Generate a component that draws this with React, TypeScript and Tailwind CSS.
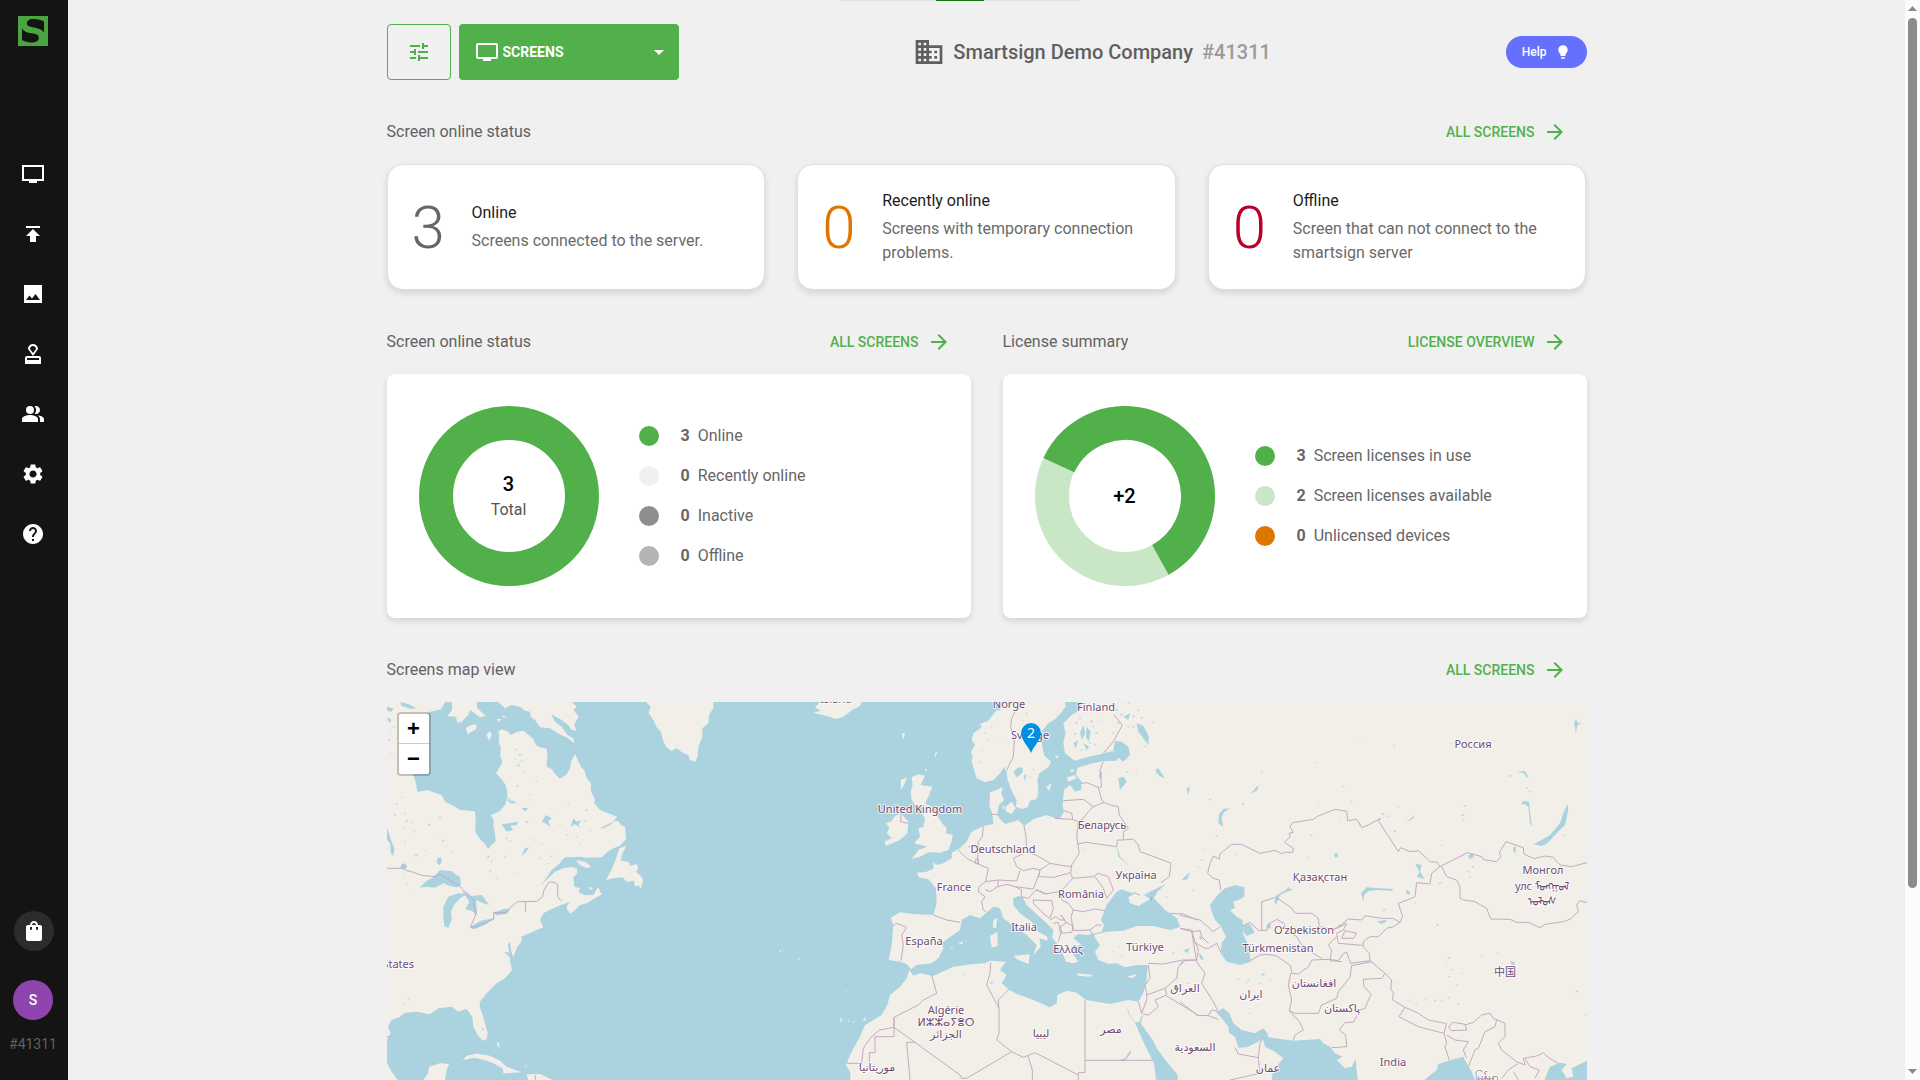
import React from "react";
import {
  MdPublish,
  MdOutlineApproval,
  MdPeopleAlt,
  MdSettings,
  MdHelp,
  MdShoppingBag,
  MdTune,
  MdTv,
  MdArrowDropDown,
  MdDomain,
  MdLightbulb,
  MdArrowForward,
} from "react-icons/md";

function TvSharp() {
  return (
    <svg viewBox="0 0 24 24" className="size-6" fill="currentColor" aria-hidden="true">
      <path d="M23 3H1v16h7v2h8v-2h7V3zm-2 14H3V5h18v12z" />
    </svg>
  );
}

function ImageSharp() {
  return (
    <svg viewBox="0 0 24 24" className="size-6" fill="currentColor" aria-hidden="true">
      <path d="M21 3H3v18h18V3zM8.5 13.5l2.5 3.01L14.5 12l4.5 6H5l3.5-4.5z" />
    </svg>
  );
}

function Logo() {
  return (
    <svg viewBox="0 0 30 28" preserveAspectRatio="none" className="size-[30px]" aria-hidden="true">
      <rect width="30" height="28" fill="#4aa540" />
      <path
        d="M26 15.5V5.2C23.5 3.6 19.5 2.8 15.5 2.9C11 3 8.700 4.600 8.900 7C9.100 9.500 12 10 16 10.700C20.500 11.500 24 12.500 26 15.500Z"
        fill="#141414"
      />
      <path
        d="M4 11.500V22.500C6.500 24.200 10.500 24.800 14 24.700C18.500 24.500 21 22.800 20.700 20C20.400 17.300 18 16.700 13.500 16.200C9 15.700 5.500 14.500 4 11.500Z"
        fill="#141414"
      />
    </svg>
  );
}

const navItems = [
  { label: "Screens", icon: <TvSharp /> },
  { label: "Publish", icon: <MdPublish className="size-6" /> },
  { label: "Media", icon: <ImageSharp /> },
  { label: "Approvals", icon: <MdOutlineApproval className="size-6" /> },
  { label: "Users", icon: <MdPeopleAlt className="size-6" /> },
  { label: "Settings", icon: <MdSettings className="size-6" /> },
  { label: "Help", icon: <MdHelp className="size-6" /> },
];

function Sidebar() {
  return (
    <aside className="flex w-[68px] shrink-0 flex-col bg-[#141414] pb-6 text-white">
      <a href="#home" aria-label="Home" className="mt-4 ml-[18px] w-fit">
        <Logo />
      </a>
      <nav className="mt-[116px] flex w-[66px] flex-col items-center gap-9">
        {navItems.map((n) => (
          <a key={n.label} href={"#" + n.label.toLowerCase()} aria-label={n.label}>
            {n.icon}
          </a>
        ))}
      </nav>
      <div className="mt-auto flex flex-col items-center">
        <button aria-label="Store" className="flex size-10 items-center justify-center rounded-full bg-[#2c2c2c]">
          <MdShoppingBag className="size-6" />
        </button>
        <div className="mt-[29px] flex w-[66px] flex-col items-center self-start">
          <button className="size-10 rounded-full bg-[#8e44ad] text-sm font-medium">S</button>
          <span className="mt-3 text-sm leading-6 text-[#606060]">#41311</span>
        </div>
      </div>
    </aside>
  );
}

function SectionHeader({ title, link }: { title: string; link: string }) {
  return (
    <div className="mb-3.5 flex h-9 items-center justify-between">
      <h2 className="text-base text-[#626262]">{title}</h2>
      <a href="#more" className="mr-5 flex items-center gap-2 text-sm font-medium text-[#52b04a]">
        {link}
        <MdArrowForward className="size-6" />
      </a>
    </div>
  );
}

function StatusCard({ value, tone, title, text }: { value: number; tone: string; title: string; text: string }) {
  return (
    <article className="flex h-[126px] items-center gap-6 rounded-2xl border border-[#e0e0e0] bg-white px-6 shadow-[0_3px_6px_rgba(0,0,0,0.12)]">
      <span className={"w-9 shrink-0 pt-0.5 text-[60px] leading-none font-light " + tone}>{value}</span>
      <div>
        <h3 className="mb-1 text-base text-[#1c1c1c]">{title}</h3>
        <p className="text-base text-[#6a6a6a]">{text}</p>
      </div>
    </article>
  );
}

type Row = { n: number; label: string; dot: string };

function ChartPanel({ rows, children, center }: { rows: Row[]; children: React.ReactNode; center: React.ReactNode }) {
  return (
    <div className="flex h-[244px] items-center gap-10 rounded-lg bg-white px-8 shadow-[0_3px_6px_rgba(0,0,0,0.12)]">
      <div className="grid size-[180px] shrink-0 place-items-center">
        <svg viewBox="0 0 180 180" className="col-start-1 row-start-1 size-[180px]" aria-hidden="true">
          {children}
        </svg>
        <div className="col-start-1 row-start-1 text-center">{center}</div>
      </div>
      <ul className="flex flex-col gap-4">
        {rows.map((r) => (
          <li key={r.label} className="flex h-6 items-center text-base text-[#666666]">
            <span className={"mr-[22px] size-5 rounded-full " + r.dot} />
            <b className="mr-2 font-bold">{r.n}</b>
            {r.label}
          </li>
        ))}
      </ul>
    </div>
  );
}

/* Map artwork. Each region is plotted on its own grid, three units to a pixel. */

const americaLand = [
  "M21 186L195 186L183 208L150 215L120 240L90 300L85 360L100 405L108 430L112 455L145 450L160 457L185 465L195 485L220 497L240 510L285 514L287 540L286 575L300 598L313 610L325 627L335 615L347 603L345 580L340 560L341 540L333 525L345 520L360 512L375 495L382 475L382 455L377 435L365 418L348 400L357 385L367 365L360 345L363 325L356 305L358 285L354 275L365 268L385 275L392 285L410 276L430 272L446 285L460 297L468 316L480 322L500 326L502 340L500 380L515 387L525 402L540 416L560 403L570 385L573 365L585 342L597 368L604 382L614 392L620 415L633 430L632 450L645 480L642 488L660 510L685 520L712 530L700 543L716 544L722 555L735 560L738 598L720 617L700 625L690 630L665 652L620 653L600 650L555 652L545 660L540 670L515 690L495 720L480 738L505 715L525 695L550 685L575 681L590 685L592 700L580 712L583 740L600 745L595 757L615 766L640 765L655 740L660 755L667 762L640 778L620 790L600 795L583 812L570 821L560 805L562 795L572 785L543 795L520 805L490 820L480 840L490 862L470 870L440 885L425 888L424 905L412 920L400 950L390 962L396 990L375 1015L350 1030L320 1060L300 1085L299 1100L308 1125L315 1150L323 1180L320 1198L309 1202L293 1185L280 1160L277 1130L260 1107L235 1115L215 1100L175 1105L165 1112L150 1123L110 1115L75 1118L60 1130L35 1140L24 1160L32 1180L21 1200Z",
  "M21 1268L35 1295L53 1320L21 1320Z",
  "M130 1320L143 1302L148 1280L180 1270L207 1272L200 1290L195 1320Z",
  "M215 186L290 186L292 205L318 228L300 232L270 210L265 225L245 245L232 248L228 230L202 228L216 210Z",
  "M258 265L270 256L290 253L288 268L262 283Z",
  "M320 285L328 273L335 285L327 303Z",
  "M350 236L365 238L355 246Z M366 230L380 235L370 226Z",
  "M355 186L375 205L395 195L420 200L435 212L450 215L452 230L465 240L480 262L510 265L530 278L562 293L583 310L580 295L562 285L545 260L525 245L513 222L545 240L565 255L575 270L590 272L582 255L596 230L580 210L590 200L575 186Z",
  "M740 617L727 640L722 662L745 665L752 678L770 672L775 685L768 695L785 710L790 722L782 746L775 735L765 740L762 722L740 725L728 712L700 715L678 720L690 698L705 665L718 625Z",
  "M588 660L615 665L635 680L620 684L600 675Z",
  "M625 740L640 745L630 750Z",
  "M798 186L812 200L806 220L820 240L830 262L843 275L850 305L860 322L875 333L890 325L910 340L925 345L930 360L945 365L953 350L955 320L967 290L967 265L985 250L987 225L1000 205L1000 186Z",
  "M248 1260L260 1247L290 1241L330 1247L360 1262L380 1280L425 1297L370 1300L368 1285L340 1270L320 1262L285 1253Z",
  "M440 1303L480 1302L518 1320L445 1320Z",
  "M350 1205L357 1210L360 1228L353 1218Z M433 1278L441 1274L438 1280Z",
  "M1248 956L1260 956L1260 959Z M1198 930L1205 933L1200 936Z M1208 929L1213 930L1210 932Z M1155 912L1158 913L1156 915Z",
];

const americaWater = [
  "M118 743L140 722L160 712L180 690L215 694L240 712L243 735L232 742L210 738L190 730L165 743L140 740Z",
  "M190 800L205 770L235 760L262 762L240 775L222 795L213 815L215 840L205 864L193 858L190 830Z",
  "M245 752L275 768L305 765L327 795L310 790L288 780L292 825L275 812L256 808L268 785Z",
  "M268 862L300 843L345 833L320 852L290 865L280 868Z",
  "M338 818L375 806L390 808L380 822L350 826Z",
  "M21 562L33 600L43 625L40 648L33 640L30 610L21 600Z",
  "M660 565L690 550L705 543L690 555L670 565Z",
  "M425 645L435 625L448 622L435 640Z",
  "M572 560L580 535L590 545L603 540L595 555L600 563L585 552Z",
  "M365 553L395 548L415 545L410 555L390 558L400 570L380 575Z",
  "M485 545L498 525L515 535L505 545L512 560L495 550Z",
  "M172 655L183 652L186 665L178 675L170 668Z",
  "M60 685L75 668L82 680L70 690Z",
  "M325 475L335 462L345 480L337 495Z",
  "M383 915L390 905L393 930L400 955L395 970L388 950L372 935L388 938Z",
  "M380 480L400 482L410 490L392 490Z M425 505L445 503L435 515Z",
  "M21 200L40 205L35 215L21 212Z M60 186L85 192L110 205L90 207L65 197Z M21 230L35 240L28 250Z",
  "M430 885L450 880L470 878L455 884Z M306 1163L312 1168L307 1172Z",
];

const americaSpecks = [
  [410, 330, 4], [420, 345, 5], [425, 362, 4], [415, 378, 5], [430, 395, 3], [405, 355, 3], [412, 440, 4], [388, 478, 5], [470, 423, 3],
  [450, 465, 3], [565, 490, 3], [620, 510, 4], [615, 545, 4], [540, 555, 3], [525, 520, 3], [440, 548, 5], [380, 595, 4], [390, 600, 3],
  [460, 600, 3], [485, 610, 3], [515, 648, 4], [480, 655, 3], [505, 670, 3], [325, 650, 5], [335, 665, 4], [330, 692, 4], [350, 715, 3],
  [375, 650, 3], [405, 698, 3], [50, 490, 4], [65, 473, 3], [45, 525, 4], [75, 520, 4], [80, 545, 5], [95, 548, 4], [148, 553, 5],
  [180, 533, 4], [70, 563, 3], [165, 580, 3], [190, 603, 4], [110, 647, 5], [103, 643, 3], [135, 632, 3], [75, 605, 3], [215, 635, 3],
  [200, 620, 3], [70, 710, 3], [80, 730, 3], [90, 755, 3], [105, 575, 3], [590, 590, 3], [560, 585, 3], [600, 610, 3], [630, 570, 3],
  [85, 1080, 4], [70, 1092, 3], [30, 270, 3], [28, 300, 4], [35, 340, 3], [40, 260, 3],
];

const americaBorders = [
  "M21 685H62L68 672L76 690L100 697L125 706L165 710L180 703L240 738L247 748L262 760L280 780L287 825L272 860L285 862L310 850L340 838L342 818H378L390 803L412 785L470 784L488 770L492 750L508 725L528 729L533 735V770L543 782",
  "M436 785L437 815 M466 1305V1320 M21 1190H32",
];

const europeLand = [
  "M40 68L62 62L45 52L60 36H185L180 48L160 58L130 80L108 87L80 78Z",
  "M258 400L275 393L285 378L303 370L325 395L322 430L300 450L258 467L253 455L275 445L260 430L268 415Z",
  "M335 262L355 253L375 257L362 285L397 290L385 320L375 340L395 350L410 375L425 398L440 415L437 430L458 435L455 455L445 480L420 488L385 487L360 500L335 507L355 480L382 470L362 465L342 460L360 440L355 415L370 410L375 385L365 370L370 350L345 345L335 330L332 305L338 285Z",
  "M302 270L320 262L312 285L303 300Z M375 240L382 235L378 247Z M405 190L413 183L405 205Z M306 130L315 128L310 150Z",
  "M610 36L600 62L590 60L565 92L540 102L545 112L520 130L515 150L525 165L513 185L518 200L515 215L522 240L530 265L555 277L580 270L600 250L612 232L620 245L622 265L632 295L640 312L650 330L648 350L665 357L683 352L690 332L710 327L715 290L712 270L718 250L745 232L753 215L732 195L725 160L720 130L745 100L765 88L782 70L797 50L795 36Z",
  "M1145 36H850L840 60L815 75L790 100L797 130L790 160L795 190L825 212L860 202L900 193L938 183L957 195L950 212L905 214L870 222L832 233L828 255L845 275L843 300L825 305L810 285L792 300L788 345L792 365L780 385L765 384L740 375L700 388L672 408L655 390L640 395L615 402L598 385L592 370L597 345L612 330L604 312L608 290L590 300L570 307L568 345L577 372L580 402L550 408L525 420L512 428L500 455L480 475L456 488L455 505L430 520L410 525L398 517L402 535L380 545L350 548L358 563L385 567L408 595L410 640L400 675L340 672L300 667L272 683L280 705L276 760L266 810L300 815L320 822L333 838L350 825L395 820L415 805L430 775L425 760L445 745L480 720L485 690L510 675L540 685L580 650L600 655L610 685L650 715L680 735L710 765L700 795L722 770L718 745L742 752L742 740L715 725L695 695L660 670L640 645L640 625L655 618L668 622L680 645L705 668L740 700L760 720L757 745L775 765L790 795L798 815L820 820L835 815L815 785L820 770L845 765L820 745L835 732L860 735L905 725L912 705L903 690L920 645L950 605L965 598L985 605L1003 612L985 622L990 640L1015 648L1050 628L1032 615L1060 600L1097 583L1072 605L1062 625L1095 660L1130 683L1141 710L1110 720L1060 708L1010 708L970 722L920 725L880 735L900 765L885 785L895 810L925 822L950 820L975 832L1010 825L1043 825L1040 870L1030 910L1015 935L985 930L930 942L858 930L830 908L800 902L772 915L770 940L750 952L700 930L650 912L625 898L605 880L620 855L600 840L618 815L570 812L555 820L520 822L460 830L400 858L360 850L340 857L328 840L320 865L300 890L270 915L262 945L245 975L195 1005L180 1040L155 1085L138 1125L152 1150L150 1170H1145Z",
  "M580 690L592 683L588 715L578 712Z M570 738L592 725L593 768L575 773Z M642 797L690 793L685 822L650 808Z",
  "M830 850L878 855L870 860L835 857Z M980 860L1012 851L998 865Z",
  "M617 350L635 335L647 355L635 372L618 365Z M607 345L614 352L610 362Z M738 292L756 278L748 303Z M708 322L718 300L713 320Z",
  "M800 262L825 255L830 265L805 275Z M810 240L825 238L815 248Z M765 195L778 200L768 205Z",
  "M475 760L490 752L487 763Z M495 750L502 752L498 755Z M452 770L460 773L455 776Z",
  "M120 985L127 988L123 1000Z M145 990L150 993L146 997Z M158 995L166 992L160 1000Z M187 995L200 977L195 992Z M135 904L142 905L138 908Z",
];

const europeWater = [
  "M980 950L990 975L1005 998L1018 995L1035 1018L1058 1050L1070 1075L1100 1115L1133 1155V1170H1068L1062 1120L1030 1055L1008 1005L985 970Z",
  "M1018 1000L1025 975L1028 978L1022 1003Z",
  "M945 152L965 155L985 170L990 195L970 215L950 200L940 180Z",
  "M1010 100L1030 107L1047 140L1045 165L1030 145L1015 125Z",
  "M640 245L655 232L668 233L668 248L650 262Z M672 258L680 250L675 275Z",
  "M955 265L970 260L980 275L960 300Z M1065 240L1075 235L1095 265L1078 258Z M1160 295L1168 290L1165 318Z",
  "M900 245L907 250L903 270L897 260Z",
  "M950 465L955 500L995 535L985 525L960 500Z",
  "M1145 570L1170 545L1155 570Z M970 80L990 70L985 90Z",
  "M840 130L850 105L856 130L846 150Z M860 110L872 125L866 155L858 140Z M820 160L835 150L828 175Z M850 160L868 170L860 180Z",
  "M958 1110L975 1105L985 1090L995 1078L990 1095L970 1115Z",
  "M820 735L850 745L885 735L880 760L860 775L830 770L850 762Z",
];

const europeSpecks = [
  [830, 100, 5], [875, 95, 5], [845, 180, 4], [890, 130, 4], [870, 160, 4], [825, 130, 4], [885, 165, 4], [840, 85, 4], [950, 60, 6],
  [965, 75, 5], [1000, 80, 5], [1015, 60, 4], [1025, 85, 5], [955, 100, 5], [985, 110, 4], [940, 130, 4], [1035, 170, 4], [1060, 95, 3],
  [930, 235, 4], [980, 245, 4], [1010, 250, 3], [1070, 250, 3], [985, 40, 4], [1000, 110, 4], [880, 110, 4], [905, 90, 3], [655, 240, 4],
  [700, 240, 3], [690, 260, 3], [680, 160, 3], [700, 110, 4], [670, 90, 3], [680, 70, 4], [565, 150, 3], [545, 180, 3], [540, 215, 3],
  [555, 130, 3], [575, 110, 3], [600, 140, 3], [965, 800, 3], [940, 785, 3], [955, 770, 3], [1120, 790, 4], [1165, 880, 4], [490, 853, 3],
  [575, 880, 6], [560, 600, 4], [720, 600, 3], [850, 480, 3], [1100, 620, 3],
];

const europeBorders = [
  "M655 45L635 85L632 110L643 150L640 200L620 240 M942 75L967 105L940 155L910 190 M910 215L900 240L905 290L895 292L905 330L912 337 M843 280L860 278L895 292 M790 332L850 328L880 350L912 337L935 347L955 350L958 375L985 415L970 425V450L1000 447L1015 465L1020 485L1075 505L1113 520L1108 560L1083 578",
  "M792 362L815 370L818 388L765 385 M818 388L835 395L850 385L865 365L880 350 M835 395L830 440L838 490L815 525L812 548 M832 462L860 457L950 470L952 450L970 450",
  "M672 408L678 440L680 485L640 505L650 530L670 542L700 535L720 540L750 520L712 497L680 485 M750 520L790 527L815 530",
  "M550 408L547 440L535 455L533 500L535 520 M475 480L500 505L525 518L565 535L557 575L537 590L535 605L555 620L545 635L550 660L558 665 M505 470L535 470 M527 508L535 508V522L527 520Z",
  "M557 575L595 570L650 573L660 542 M595 570L593 590L570 605L557 600 M593 590L620 583L645 590L700 597L710 570L720 545 M645 590L665 600L663 620L685 625L708 600L740 612",
  "M720 540L715 560L760 562L812 548L818 565L805 580L780 605L735 612L708 598 M818 565L880 560L895 550L925 560L940 600L920 625L910 595L885 560",
  "M818 660L850 665L885 657L915 662 M780 605L785 630L805 640L820 660L813 680L820 720 M700 630L755 632L760 655L750 685L735 675L700 640Z M750 690L768 680L780 690L795 690L782 675L790 685L800 700 M782 710L800 697L820 710L815 727L785 730Z M760 700L775 697L782 730L775 755 M820 722L870 720L890 705L905 705 M870 720L880 735",
  "M400 675L440 690L480 697 M278 708L290 700L320 712L305 735L310 765L303 812 M573 372L598 375 M303 370L302 395L325 400",
  "M395 855L410 910L370 930L355 945L282 982V1012L238 1020L210 1045L190 1075L185 1120H140 M282 982V1040H225V1088H208V1115 M282 1012L345 1057H320L330 1170 M345 1057L480 1155L485 1165H500L635 1085L590 1050L597 1030V955L560 885L570 850L572 818 M597 955L595 930L627 898",
  "M635 1085L670 1102L705 1088L835 1155 M683 1095L697 1140V1170 M855 930V1148H835V1170 M855 1111H1058 M1015 935L1025 970L1040 930V910L1035 885L1050 865L1045 825 M1045 820L1090 822L1150 810L1190 810 M1150 812L1135 830L1130 865L1095 895L1040 915 M1095 895L1100 915L1065 930L1075 950L1045 975L1028 972 M1100 918L1195 976 M1110 670L1150 672L1190 690 M1140 715L1175 720L1185 755L1195 780L1190 810",
  "M1000 608L1020 615 M1054 620V635",
];

const asiaWater = [
  "M90 645L110 618L135 595L165 585L193 592L193 620L175 630L160 635L165 655L150 660L170 680L188 690L190 735L205 765L212 815L180 825L140 815L122 790L125 760L138 740L120 705L105 690L95 665Z",
  "M190 705L210 703L224 728L200 738L190 725Z",
  "M108 965L130 955L148 970L160 1000L185 1020L225 1030L250 1015L262 1030L265 1042L340 1052L420 1047L430 1060L450 1070L465 1090L488 1100L470 1110L495 1135L515 1130L527 1107L533 1170H275L280 1140L310 1105L285 1085L255 1070L248 1045L235 1055L200 1072L175 1073L165 1040L148 1030L145 1010L125 985Z",
  "M733 1170L770 1140L775 1122L805 1112L850 1100L860 1120L875 1145L885 1170Z",
  "M1095 1165L1110 1130L1140 1118L1160 1122L1145 1140L1160 1165L1180 1160L1175 1135L1221 1112V1170H1095Z",
  "M1060 462L1075 455L1110 435L1140 400L1150 370L1162 342L1165 360L1155 405L1125 435L1100 462L1085 468Z",
  "M543 610L560 592L600 595L640 597L635 602L590 600L565 603L552 615L550 635Z",
  "M705 520L725 525L720 545L735 568L710 560L718 545Z M678 600L690 605L688 615L680 612Z",
  "M590 695L615 690L622 693L605 702Z M863 497L880 490L880 503L870 508Z M1000 470L1008 470L1006 490L1000 485Z",
  "M283 635L290 615L318 600L325 592L338 600L320 605L300 615L288 645Z",
  "M990 813L1003 815L1005 824L995 825Z M462 493L470 488L475 500L465 503Z M262 705L272 700L272 715L262 715Z",
  "M55 790L65 795L70 810L62 808Z M10 780L30 775L22 790Z M55 740L68 740L65 750Z M675 400L705 375L700 385Z",
  "M115 400L117 372L130 357L150 355L132 367L124 385L130 410L122 405Z M210 312L222 300L235 285L233 300Z M8 570L30 545L22 568Z",
  "M1022 345L1030 332L1048 336L1050 365L1056 410L1050 400L1045 350L1032 342Z M1010 245L1035 244L1046 262L1040 262L1030 249Z M1182 100L1188 88L1192 98L1205 98L1192 106L1188 130L1184 108Z",
];

const asiaSpecks = [
  [540, 150, 3], [643, 167, 3], [407, 218, 3], [490, 290, 3], [515, 333, 3], [610, 372, 5], [622, 380, 4], [645, 425, 5], [480, 393, 3],
  [540, 405, 3], [393, 436, 4], [383, 502, 3], [170, 493, 3], [865, 545, 4], [878, 530, 5], [870, 562, 4], [780, 580, 5], [705, 637, 3],
  [612, 662, 5], [773, 705, 5], [415, 345, 3], [250, 855, 6], [175, 868, 4], [205, 868, 4], [240, 882, 4], [272, 868, 3], [200, 880, 3],
  [808, 805, 5], [800, 817, 3], [815, 838, 4], [845, 850, 3], [808, 860, 4], [830, 885, 4], [905, 798, 3], [953, 788, 3], [765, 930, 4],
  [785, 935, 4], [805, 923, 4], [835, 943, 5], [735, 930, 3], [710, 940, 3], [690, 930, 3], [645, 878, 3], [1190, 905, 5], [26, 300, 5],
  [90, 330, 4], [245, 245, 4], [190, 342, 5], [70, 480, 3], [65, 510, 4], [55, 530, 3], [110, 440, 4], [855, 350, 5], [848, 375, 5],
  [850, 390, 4], [990, 258, 5], [1030, 245, 4], [1040, 295, 4], [1050, 305, 4], [785, 465, 3], [655, 353, 3], [1150, 435, 3], [1217, 975, 3],
  [210, 970, 3], [342, 985, 3], [478, 705, 4], [815, 160, 3], [40, 600, 3],
];

const asiaBorders = [
  "M122 600L118 570L100 565L83 550L90 520L100 498L118 507L120 492L155 463L185 463L240 490L285 481L307 492L312 487H338L340 475L313 457L330 440L328 430L340 427L330 410L338 398L400 388L410 380L465 358L500 364L503 392L530 388L545 412L555 410L602 385L595 392L655 485L662 473L690 485L715 482L740 505L750 515L772 517L780 530L862 488L905 500L910 509L950 515L962 500L958 487L978 455L1030 473L1032 492L1062 506L1095 498L1120 502L1140 525L1175 530L1221 518",
  "M780 530L755 550L750 582L710 578L705 620L690 627L655 640L668 680L660 697L640 710L620 715L595 740L570 740L550 755V770L568 790L570 812L615 850L635 870L632 895L640 910L638 930L675 952L715 970L745 990L795 1000",
  "M785 530L800 560L830 570L840 590V625L850 630L885 635L920 655L932 687L990 688L1010 697L1045 697L1080 713L1095 703L1150 695L1170 688L1195 665L1190 645L1200 632L1221 638",
  "M120 710L100 725L60 690L0 676 M245 722V635L287 622L330 650L347 670H395L415 685L418 710L460 718L480 708L505 687L545 690L555 677L605 685L640 685L660 697 M187 708L210 697L235 721H262V705L290 688L312 700L320 720L350 740L365 765L400 790L425 805 M460 720L500 700L490 720L470 730L475 760L548 766 M495 722L530 730L520 745L485 745Z M470 740L445 765L455 780L450 812L487 815",
  "M210 812L240 795L260 793L290 798L332 827L335 850L355 852L370 840L385 832L395 810L445 808L475 812L490 790L500 787L512 820L570 812 M332 850L325 885L335 930L328 962L345 970L415 970L425 945L470 925L475 905L510 862L515 827L575 815",
  "M328 962L358 995L370 1020L345 1035L340 1052 M615 850L605 865L550 868L552 890L573 913L555 955L540 960L520 997H495L478 1020L497 1035L500 1070L455 1073",
  "M0 715L35 725L40 755L75 775H85L110 760L122 787 M35 725L60 722L65 740L85 760 M40 755L50 815L75 850L65 880L100 935L112 960 M0 825L15 812L50 810 M0 935L52 976L85 977L95 960L112 963 M85 977L115 988 M165 1073L175 1092L235 1103L240 1060L250 1040 M235 1103L240 1150L150 1170",
  "M675 952L657 980L715 1010L792 1030L800 998 M805 1010L820 997L855 1003L860 1020L815 1022Z M855 1005L880 997L905 975L930 970L940 985L975 1000V1040L955 1060L965 1080L1010 1115L1035 1125L1030 1105L1070 1098L1090 1088L1108 1105L1135 1120 M792 1030L800 1060L795 1070L808 1110 M800 1035L825 1050L865 1055L850 1080L860 1105 M865 1130L885 1080L895 1075L915 1025L945 1010L950 990 M1035 1105L1050 1130L1078 1140L1065 1165 M1015 1120L985 1140L965 1165 M1000 1145L1015 1170",
];

const mapLabels: [number, number, string][] = [
  [836, 703, "Ísland"], [1009, 708, "Norge"], [1096, 711, "Finland"], [1030, 739, "Sverige"], [920, 813, "United Kingdom"],
  [1102, 829, "Беларусь"], [1003, 853, "Deutschland"], [1136, 879, "Україна"], [954, 891, "France"], [1081, 898, "România"],
  [1024, 931, "Italia"], [924, 945, "España"], [1068, 953, "Ελλάς"], [1145, 951, "Türkiye"], [1185, 992, "العراق"],
  [946, 1014, "Algérie"], [946, 1026, "ⵍⵣⵣⴰⵢⴻⵔ"], [946, 1038, "الجزائر"], [1041, 1037, "ليبيا"], [1111, 1033, "مصر"],
  [1195, 1051, "السعودية"], [877, 1071, "موريتانيا"], [1473, 748, "Россия"], [1543, 874, "Монгол"], [1542, 890, "улс ᠮᠣᠩᠭᠣᠯ"],
  [1542, 905, "ᠤᠯᠤᠰ"], [1320, 881, "Қазақстан"], [1304, 934, "Oʻzbekiston"], [1278, 952, "Türkmenistan"], [1314, 987, "افغانستان"],
  [1251, 998, "ایران"], [1342, 1012, "پاکستان"], [1505, 976, "中国"], [1268, 1072, "عمان"], [1393, 1066, "India"], [1486, 1081, "မြန်မာ"],
];

function Shapes({ paths, fill }: { paths: string[]; fill: string }) {
  return (
    <>
      {paths.map((d) => (
        <path key={d} d={d} fill={fill} />
      ))}
    </>
  );
}

function Specks({ points }: { points: number[][] }) {
  return (
    <g fill="#aad3df" opacity="0.85">
      {points.map(([x, y, r], i) => (
        <path key={i} d={`M${x - r} ${y + (i % 3)}l${r} -${r}l${r} ${1 + (i % 2)}l-${r} ${r}z`} />
      ))}
    </g>
  );
}

function Borders({ paths }: { paths: string[] }) {
  return <path d={paths.join(" ")} fill="none" stroke="#c3aabf" strokeWidth="3" strokeLinejoin="round" />;
}

function WorldMap() {
  return (
    <svg viewBox="387 702 1200 378" preserveAspectRatio="xMidYMin slice" className="absolute inset-0 size-full" role="img" aria-label="Map of screens">
      <rect x="387" y="702" width="1200" height="378" fill="#aad3df" />
      <g transform="translate(380 640) scale(0.33333)">
        <Shapes paths={americaLand} fill="#f2efe9" />
        <Shapes paths={americaWater} fill="#aad3df" />
        <Specks points={americaSpecks} />
        <Borders paths={americaBorders} />
      </g>
      <g transform="translate(800 690) scale(0.33333)">
        <Shapes paths={europeLand} fill="#f2efe9" />
      </g>
      <g transform="translate(1180 690) scale(0.33333)">
        <rect x="2" y="36" width="1219" height="1134" fill="#f2efe9" />
        <Shapes paths={asiaWater} fill="#aad3df" />
        <Specks points={asiaSpecks} />
        <Borders paths={asiaBorders} />
      </g>
      <g transform="translate(800 690) scale(0.33333)">
        <Shapes paths={europeWater} fill="#aad3df" />
        <Specks points={europeSpecks} />
        <Borders paths={europeBorders} />
      </g>
      <g
        fill="#6f4b74"
        stroke="#ffffff"
        strokeOpacity="0.75"
        strokeWidth="2"
        strokeLinejoin="round"
        paintOrder="stroke"
        textAnchor="middle"
        className="font-['Noto_Sans','DejaVu_Sans','Noto_Sans_CJK_SC',sans-serif] text-[11px]"
      >
        {mapLabels.map(([x, y, t]) => (
          <text key={t} x={x} y={y}>
            {t}
          </text>
        ))}
        <text x="414" y="968" textAnchor="end">
          United States
        </text>
      </g>
      <path d="M1031 753C1029 747 1021 740 1021 733A10 10 0 0 1 1041 733C1041 740 1033 747 1031 753Z" fill="#0090e3" />
      <text x="1031" y="738" textAnchor="middle" fill="#fff" className="font-['Noto_Sans',sans-serif] text-sm">
        2
      </text>
    </svg>
  );
}

function Scrollbar() {
  return (
    <div className="flex w-[15px] shrink-0 flex-col items-center bg-[#fcfcfc] py-1.5" aria-hidden="true">
      <svg viewBox="0 0 9 5" className="h-[5px] w-[9px]">
        <path d="M4.5 0L9 5H0z" fill="#8b8b8b" />
      </svg>
      <div className="my-[7px] w-full flex-1">
        <div className="mx-auto h-5/6 w-[9px] rounded-full bg-[#8b8b8b]" />
      </div>
      <svg viewBox="0 0 9 5" className="h-[5px] w-[9px]">
        <path d="M4.500 5L9 0H0z" fill="#8b8b8b" />
      </svg>
    </div>
  );
}

export default function App() {
  return (
    <div className="flex min-h-screen bg-[#f0f0f0] font-['Roboto',sans-serif]">
      <Sidebar />
      <main className="relative flex min-w-0 flex-1 flex-col">
        <div className="absolute top-0 left-[42%] flex h-px w-[241px] justify-center bg-[#e2e2e2]">
          <div className="h-px w-12 bg-[#107c10]" />
        </div>
        <div className="mx-auto flex w-full max-w-[1200px] flex-1 flex-col gap-8 pt-6">
          <header className="mb-0.5 flex h-14 items-center justify-between">
            <div className="flex gap-2">
              <button aria-label="Filter" className="flex h-14 w-16 items-center justify-center rounded border border-[#52b04a] text-[#52b04a]">
                <MdTune className="size-6" />
              </button>
              <button className="flex h-14 w-[220px] items-center rounded bg-[#52b04a] pr-2 pl-4 text-sm font-bold text-white">
                <MdTv className="mr-1 size-6" />
                SCREENS
                <MdArrowDropDown className="ml-auto size-6" />
              </button>
            </div>
            <h1 className="flex items-center gap-2 text-xl font-medium text-[#5f5f5f]">
              <MdDomain className="size-8" />
              <span>
                Smartsign Demo Company <span className="ml-1 text-[#9b9b9b]">#41311</span>
              </span>
            </h1>
            <button className="flex h-8 items-center gap-2 rounded-full bg-[#6570ff] px-4 text-xs font-medium text-white">
              Help
              <MdLightbulb className="size-4" />
            </button>
          </header>

          <section>
            <SectionHeader title="Screen online status" link="ALL SCREENS" />
            <div className="grid grid-cols-3 gap-8">
              <StatusCard value={3} tone="text-[#666666]" title="Online" text="Screens connected to the server." />
              <StatusCard value={0} tone="text-[#de7700]" title="Recently online" text="Screens with temporary connection problems." />
              <StatusCard value={0} tone="text-[#b8002a]" title="Offline" text="Screen that can not connect to the smartsign server" />
            </div>
          </section>

          <div className="mt-0.5 grid grid-cols-2 gap-8">
            <section>
              <SectionHeader title="Screen online status" link="ALL SCREENS" />
              <ChartPanel
                center={
                  <>
                    <div className="text-xl leading-7 font-medium text-black">3</div>
                    <div className="text-base text-[#555555]">Total</div>
                  </>
                }
                rows={[
                  { n: 3, label: "Online", dot: "bg-[#52b04a]" },
                  { n: 0, label: "Recently online", dot: "bg-[#f0f0f0]" },
                  { n: 0, label: "Inactive", dot: "bg-[#8e8e8e]" },
                  { n: 0, label: "Offline", dot: "bg-[#b4b4b4]" },
                ]}
              >
                <circle cx="90" cy="90" r="73" fill="none" stroke="#52b04a" strokeWidth="34" />
              </ChartPanel>
            </section>
            <section>
              <SectionHeader title="License summary" link="LICENSE OVERVIEW" />
              <ChartPanel
                center={<div className="text-xl font-medium text-black">+2</div>}
                rows={[
                  { n: 3, label: "Screen licenses in use", dot: "bg-[#52b04a]" },
                  { n: 2, label: "Screen licenses available", dot: "bg-[#c9e6c7]" },
                  { n: 0, label: "Unlicensed devices", dot: "bg-[#de7700]" },
                ]}
              >
                <circle cx="90" cy="90" r="73" fill="none" stroke="#c9e6c7" strokeWidth="34" />
                <circle
                  cx="90"
                  cy="90"
                  r="73"
                  fill="none"
                  stroke="#52b04a"
                  strokeWidth="34"
                  pathLength="5"
                  strokeDasharray="3 2"
                  transform="rotate(205 90 90)"
                />
              </ChartPanel>
            </section>
          </div>

          <section className="mt-0.5 flex flex-1 flex-col">
            <SectionHeader title="Screens map view" link="ALL SCREENS" />
            <div className="relative min-h-[376px] flex-1 overflow-hidden">
              <WorldMap />
              <div className="absolute top-2.5 left-2.5 flex flex-col overflow-hidden rounded border-2 border-black/20 bg-clip-padding font-['Liberation_Sans',sans-serif] text-[22px] font-bold text-black">
                <button aria-label="Zoom in" className="h-[30px] w-[30px] border-b border-[#cccccc] bg-white leading-[30px]">
                  +
                </button>
                <button aria-label="Zoom out" className="h-[30px] w-[30px] bg-white leading-[30px]">
                  −
                </button>
              </div>
            </div>
          </section>
        </div>
      </main>
      <Scrollbar />
    </div>
  );
}
